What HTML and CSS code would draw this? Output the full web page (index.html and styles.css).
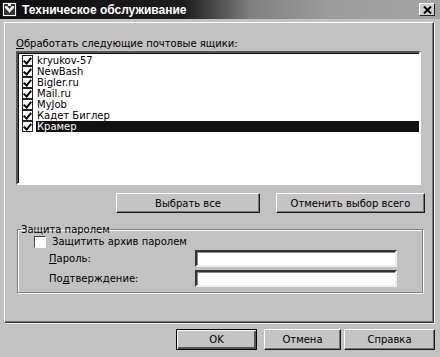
FILE: index.html
```html
<!DOCTYPE html>
<html lang="ru">

<head>
    <meta charset="UTF-8">
    <title>Техническое обслуживание</title>
    <link rel="stylesheet" href="styles.css">
</head>

<body>
<div class="window">
    <!-- Title bar -->
    <div class="titlebar">
        <svg class="app-icon" width="15" height="15" viewBox="0 0 15 15">
            <rect x="0.5" y="0.5" width="14" height="14" fill="#fff" stroke="#222"/>
            <rect x="2" y="2" width="11" height="11" fill="#333"/>
            <path d="M3 4 L5 4 L7.5 7 L10 4 L12 4 L12 6 L9 9 L7.5 11 L6 9 L3 6 Z" fill="#eee"/>
            <rect x="6" y="2" width="3" height="2" fill="#eee"/>
        </svg>
        <span class="title">Техническое обслуживание</span>
        <span class="close-btn">
            <svg width="9" height="8" viewBox="0 0 9 8">
                <path d="M1 0.5 L8 7.5 M8 0.5 L1 7.5" stroke="#000" stroke-width="2"/>
            </svg>
        </span>
    </div>

    <!-- Main page -->
    <div class="page">
        <div class="caption"><u>О</u>бработать следующие почтовые ящики:</div>

        <div class="listbox">
            <div class="item"><span class="check"></span><span class="name">kryukov-57</span></div>
            <div class="item"><span class="check"></span><span class="name">NewBash</span></div>
            <div class="item"><span class="check"></span><span class="name">Bigler.ru</span></div>
            <div class="item"><span class="check"></span><span class="name">Mail.ru</span></div>
            <div class="item"><span class="check"></span><span class="name">MyJob</span></div>
            <div class="item"><span class="check"></span><span class="name">Кадет Биглер</span></div>
            <div class="item selected"><span class="check"></span><span class="name">Крамер</span></div>
        </div>

        <div class="list-actions">
            <button class="btn btn-select">Выбрать все</button>
            <button class="btn btn-unselect">Отменить выбор всего</button>
        </div>

        <fieldset class="group">
            <legend>Защита паролем</legend>
            <div class="protect-row">
                <span class="box"></span>
                <span>Защитить архив паролем</span>
            </div>
            <div class="field-row">
                <label><u>П</u>ароль:</label>
                <span class="input"></span>
            </div>
            <div class="field-row">
                <label>По<u>д</u>тверждение:</label>
                <span class="input"></span>
            </div>
        </fieldset>
    </div>

    <!-- Dialog buttons -->
    <div class="footer">
        <button class="btn btn-ok">OK</button>
        <button class="btn btn-cancel">Отмена</button>
        <button class="btn btn-help">Справка</button>
    </div>
</div>
</body>

</html>
```

FILE: styles.css
```css
body {
    margin: 0;
    padding: 0;
    font-family: 'DejaVu Sans', sans-serif;
    font-size: 10px;
    color: #000;
    background-color: #c2c2c2;
}

.window {
    width: 440px;
    height: 357px;
    background-color: #c2c2c2;
    overflow: hidden;
    display: flex;
    flex-direction: column;
}

/* title bar */
.titlebar {
    height: 19px;
    flex: none;
    display: flex;
    align-items: center;
    padding-left: 2px;
    background: linear-gradient(90deg, #0e0e0e 0%, #1d1d1d 42%, #808080 57%, #9c9c9c 75%, #a4a4a4 100%);
}

.app-icon {
    flex: none;
}

.title {
    margin-left: 5px;
    color: #fff;
    font-family: 'Liberation Sans', sans-serif;
    font-weight: bold;
    font-size: 12px;
    flex: 1;
}

.close-btn {
    width: 14px;
    height: 11px;
    margin-right: 5px;
    background-color: #cfcfcf;
    border: 1px solid;
    border-color: #fff #222 #222 #fff;
    display: flex;
    align-items: center;
    justify-content: center;
}

/* page */
.page {
    box-sizing: border-box;
    flex: none;
    margin: 3px 6px 0 4px;
    height: 301px;
    border: 1px solid #fff;
    border-right-color: #333;
    border-bottom-color: #333;
    box-shadow: 1px 1px 0 #eee, inset -1px -1px 0 #777;
    padding: 14px 12px 0 11px;
    display: flex;
    flex-direction: column;
}

.caption {
    height: 13px;
    line-height: 13px;
}

.listbox {
    box-sizing: border-box;
    margin-top: 1px;
    height: 134px;
    background-color: #fff;
    border: 2px solid;
    border-color: #555 #fff #fff #555;
    box-shadow: inset 1px 1px 0 #111;
    padding-top: 2px;
}

.item {
    display: flex;
    align-items: center;
    height: 11px;
}

.check {
    width: 9px;
    height: 9px;
    margin: 0 3px 0 4px;
    border: 1px solid #222;
    background-color: #fff;
    position: relative;
}

.check::after {
    content: '';
    position: absolute;
    left: 2px;
    top: 0;
    width: 3px;
    height: 6px;
    border: solid #000;
    border-width: 0 2px 2px 0;
    transform: rotate(40deg);
}

.name {
    flex: 1;
    height: 11px;
    line-height: 11px;
    padding-left: 1px;
}

.item.selected .name {
    background-color: #111;
    color: #fff;
}

/* buttons */
.btn {
    font-family: 'DejaVu Sans', sans-serif;
    font-size: 10px;
    color: #000;
    background-color: #c4c4c4;
    border: 1px solid;
    border-color: #fff #1a1a1a #1a1a1a #fff;
    box-shadow: inset -1px -1px 0 #777;
    padding: 0;
    height: 21px;
}

.list-actions {
    display: flex;
    justify-content: flex-end;
    gap: 16px;
    margin-top: 8px;
    margin-right: -4px;
}

.list-actions .btn {
    height: 20px;
}

.btn-select {
    width: 144px;
}

.btn-unselect {
    width: 149px;
}

/* group box */
.group {
    box-sizing: border-box;
    margin: 10px -2px 0 1px;
    height: 70px;
    padding: 0 0 0 16px;
    border: 1px solid #808080;
    box-shadow: 1px 1px 0 #fff, inset 1px 1px 0 #fff;
}

.group legend {
    padding: 0;
    margin-left: -13px;
    line-height: 13px;
}

.protect-row {
    display: flex;
    align-items: center;
    gap: 6px;
    height: 13px;
    margin-top: -1px;
}

.box {
    width: 10px;
    height: 10px;
    background-color: #fff;
    border: 1px solid;
    border-color: #444 #fff #fff #444;
}

.field-row {
    display: flex;
    align-items: center;
    padding-left: 15px;
    margin-top: 2px;
}

.field-row + .field-row {
    margin-top: 3px;
}

.field-row label {
    width: 146px;
}

.input {
    width: 198px;
    height: 13px;
    background-color: #fff;
    border: 2px solid;
    border-color: #333 #eee #eee #333;
    box-shadow: inset 1px 1px 0 #888;
}

/* dialog footer */
.footer {
    display: flex;
    justify-content: flex-end;
    gap: 7px;
    padding: 6px 5px 0 0;
}

.btn-ok {
    width: 81px;
    border-color: #000;
    box-shadow: inset 1px 1px 0 #fff, inset -2px -2px 0 #555;
}

.btn-cancel {
    width: 77px;
    margin-right: -4px;
}

.btn-help {
    width: 91px;
}
```
